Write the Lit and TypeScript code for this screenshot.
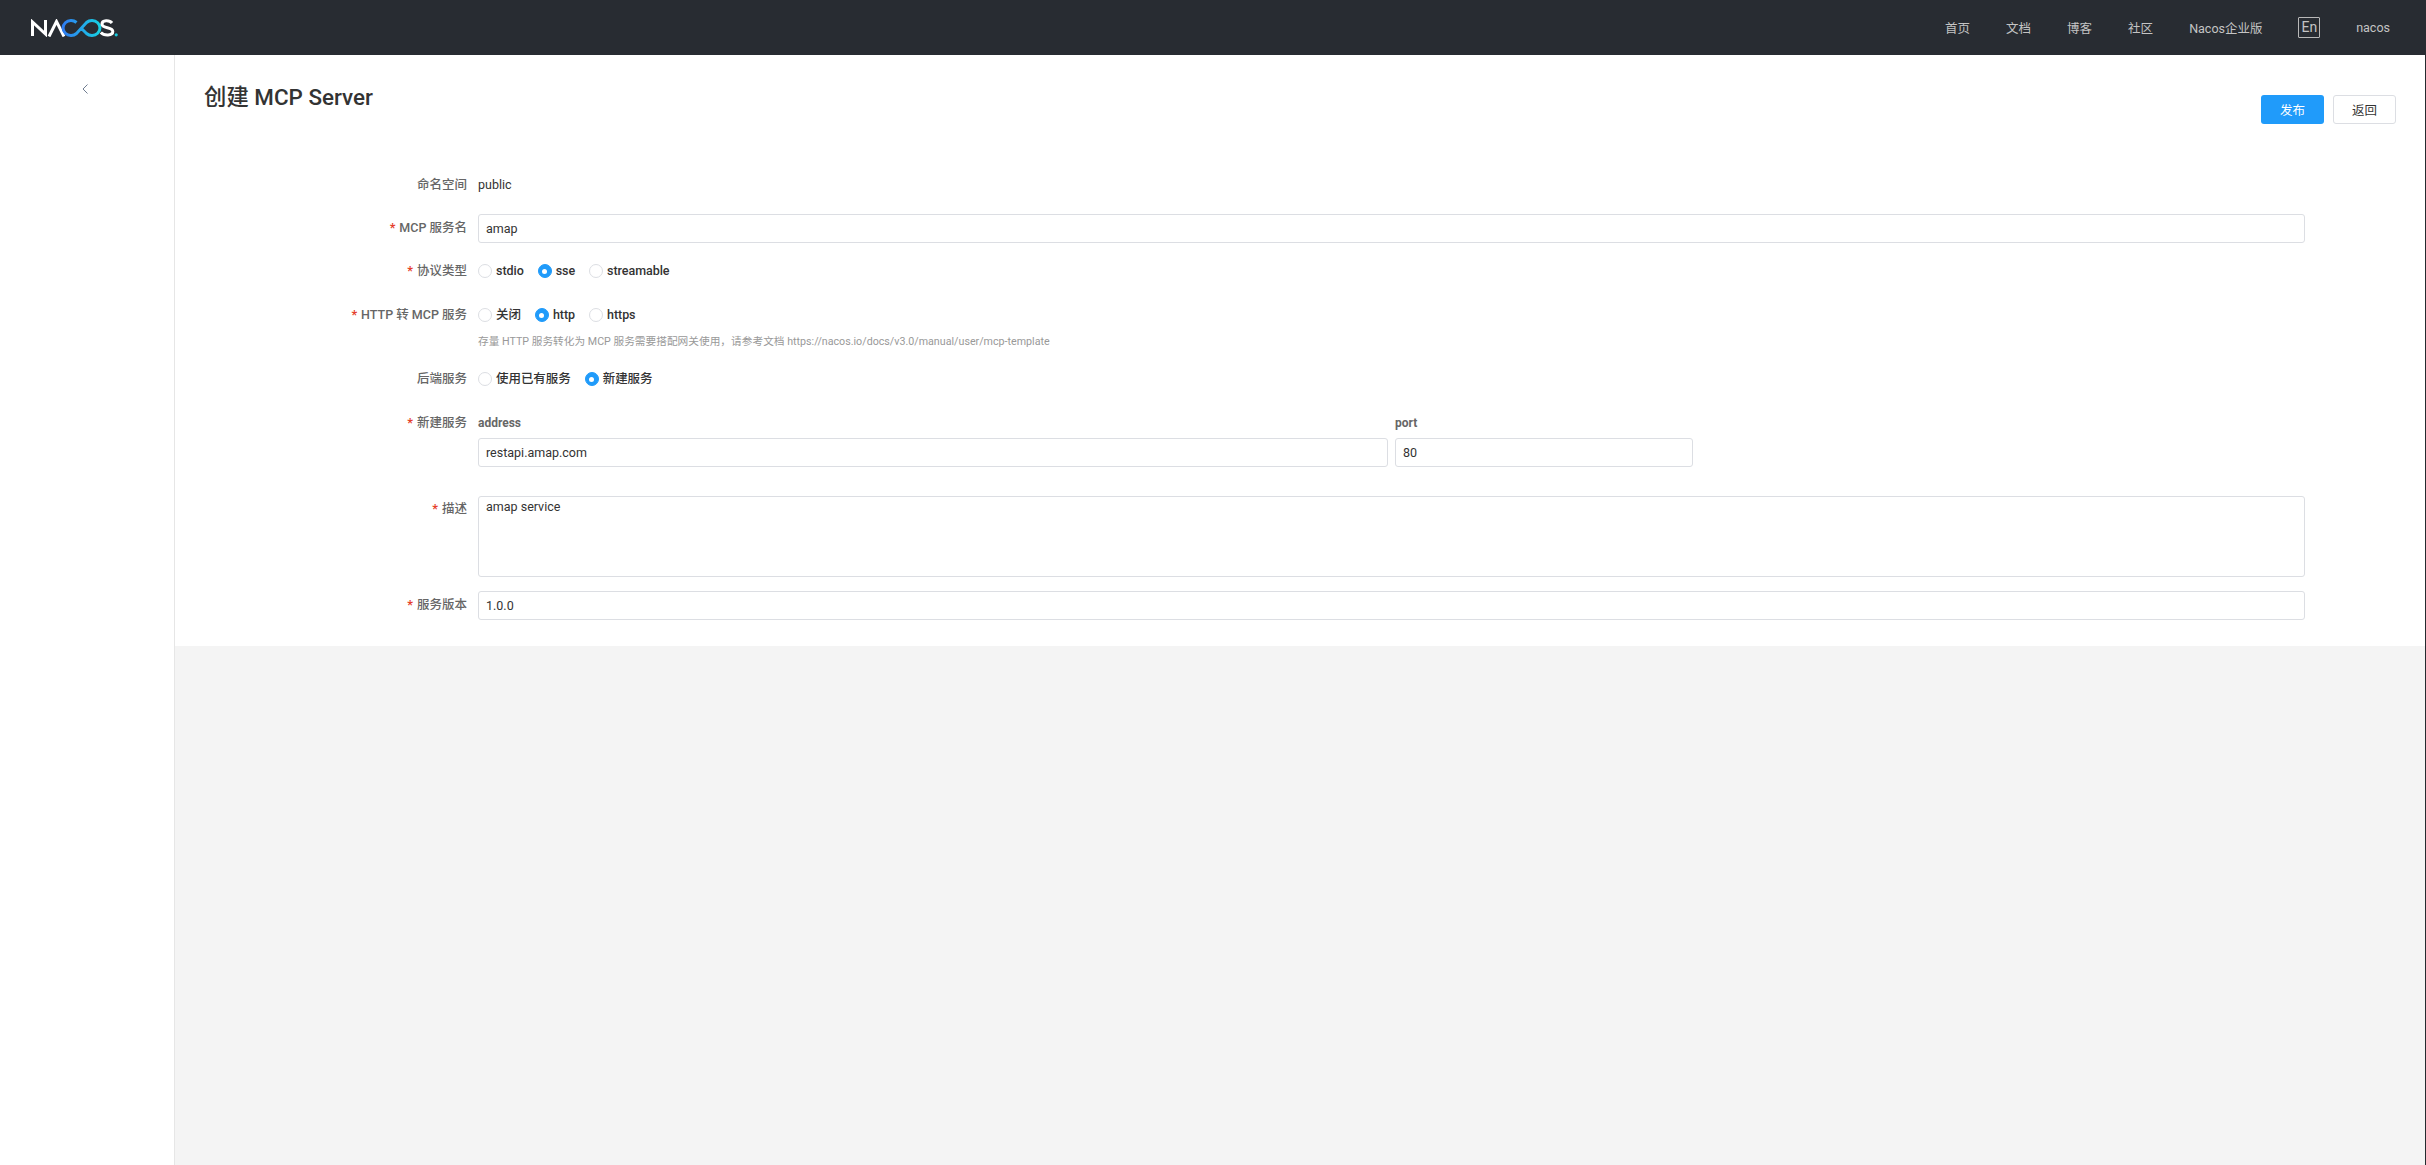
import { LitElement, html, css } from "lit";
import { customElement } from "lit/decorators.js";

const radio = (label: string, checked = false) => html`
  <span class="radio"><i class="dot ${checked ? "on" : ""}"></i><span>${label}</span></span>`;

@customElement("app-root")
export class AppRoot extends LitElement {
  static styles = css`
    :host { display: block; width: 2426px; height: 1165px; overflow: hidden; background: #252a2f; font-family: Roboto, "Noto Sans CJK SC", sans-serif; font-size: 12.5px; color: #333; }
    .top { height: 55px; background: #282c32; display: flex; align-items: center; padding: 0 36px 0 31px; box-sizing: border-box; }
    .logo { display: block; width: 87px; height: 18px; }
    .nav { margin-left: auto; display: flex; align-items: center; color: #c4c4c4; font-size: 12.5px; font-weight: 400; }
    .nav span { margin-left: 36px; }
    .nav .en { border: 1px solid #b8b8b8; border-radius: 1px; padding: 0 2px; line-height: 19px; height: 19px; font-size: 14px; }
    .main { display: flex; height: 1110px; width: 2425px; background: #f4f4f4; }
    .side { width: 175px; flex: none; box-sizing: border-box; background: #fff; border-right: 1px solid #e6e6e6; display: flex; justify-content: center; align-items: flex-start; padding: 29px 4px 0 0; }
    .side svg { display: block; width: 6px; height: 10px; }
    .content { flex: 1; min-width: 0; }
    .panel { background: #fff; height: 591px; box-sizing: border-box; padding: 28px 120px 0 0; }
    .head { display: flex; justify-content: space-between; height: 88px; padding-left: 29px; margin-right: -91px; }
    h1 { margin: 0; font-size: 22.4px; font-weight: 500; color: #333; line-height: 28px; }
    .actions { display: flex; gap: 9px; margin-top: 12px; }
    .btn { width: 63px; height: 29px; box-sizing: border-box; border-radius: 3px; display: flex; align-items: center; justify-content: center; padding-bottom: 1px; }
    .primary { background: #209bfa; color: #fff; }
    .normal { background: #fff; border: 1px solid #dcdee3; color: #333; }
    .row { display: flex; align-items: flex-start; }
    .lab { flex: none; width: 303px; padding-right: 11px; box-sizing: border-box; text-align: right; color: #666; font-weight: 500; line-height: 28px; }
    .req::before { content: "*"; color: #e53f2c; font-weight: 700; margin-right: 4px; }
    .ctl { flex: 1; min-width: 0; line-height: 28px; }
    .r-mcp { margin-top: 15px; }
    .r-proto { margin-top: 14px; }
    .r-http { margin-top: 16px; }
    .r-back { margin-top: 14px; }
    .r-new { margin-top: 21px; }
    .r-new .lab { line-height: 18px; }
    .r-desc { margin-top: 29px; }
    .r-desc .lab { margin-top: -1px; }
    .r-ver { margin-top: 14px; }
    .inp, .area { display: block; width: 100%; box-sizing: border-box; height: 29px; border: 1px solid #dcdee3; border-radius: 3px; padding: 0 7px; font: inherit; color: #333; background: #fff; outline: none; }
    .area { height: 81px; padding: 1px 7px; line-height: 17px; resize: none; overflow: hidden; }
    .radios { display: flex; height: 28px; align-items: center; }
    .radio { display: flex; align-items: center; margin-right: 14px; font-weight: 500; color: #333; letter-spacing: -0.05px; }
    .dot { width: 14px; height: 14px; box-sizing: border-box; border: 1px solid #dcdee3; border-radius: 50%; margin-right: 4px; background: #fff; display: flex; align-items: center; justify-content: center; }
    .dot.on { background: #209bfa; border-color: #209bfa; }
    .dot.on::after { content: ""; width: 5px; height: 5px; border-radius: 50%; background: #fff; }
    .hint { font-size: 10.7px; color: #999; line-height: 18px; margin-top: 4px; }
    .pair { display: flex; gap: 7px; }
    .addr { width: 910px; }
    .port { width: 298px; }
    .sub { line-height: 18px; color: #666; font-weight: 700; font-size: 12px; margin-bottom: 6px; }
  `;

  render() {
    return html`
      <header class="top">
        <svg class="logo" viewBox="0 0 87 18" fill="none" stroke-width="3">
          <defs><linearGradient id="g" x1="32" x2="69" y1="0" y2="0" gradientUnits="userSpaceOnUse"><stop offset="0" stop-color="#2f7cf0"/><stop offset="1" stop-color="#17d0e2"/></linearGradient></defs>
          <path d="M1.5 17V3L14.5 15V1" stroke="#fff"/>
          <path d="M18 17.5L25.5 2.5L33 17.5" stroke="#fff"/>
          <path d="M45.5 3.5A8 7.5 0 1 0 45.5 14.5L55.5 3.5A8 7.5 0 1 1 55.5 14.5L50.5 9.5" stroke="url(#g)"/>
          <path d="M81 4C78.5 .8 71 .8 71 5C71 10 81.8 7.5 81.8 12.6C81.8 17 73 17 69.8 13.5" stroke="#fff"/>
          <circle cx="85.2" cy="15.8" r="1.6" fill="#17c8dc"/>
        </svg>
        <nav class="nav">
          <span>首页</span><span>文档</span><span>博客</span><span>社区</span><span>Nacos企业版</span><span class="en">En</span><span>nacos</span>
        </nav>
      </header>
      <div class="main">
        <aside class="side">
          <svg viewBox="0 0 6 10" fill="none" stroke="#6f7c90" stroke-width="1"><path d="M5.5 .5L1 5L5.5 9.5"/></svg>
        </aside>
        <div class="content">
          <section class="panel">
            <div class="head">
              <h1>创建 MCP Server</h1>
              <div class="actions"><div class="btn primary">发布</div><div class="btn normal">返回</div></div>
            </div>
            <div class="row"><div class="lab">命名空间</div><div class="ctl">public</div></div>
            <div class="row r-mcp"><div class="lab req">MCP 服务名</div><div class="ctl"><input class="inp" .value=${"amap"} /></div></div>
            <div class="row r-proto"><div class="lab req">协议类型</div><div class="ctl radios">${radio("stdio")}${radio("sse", true)}${radio("streamable")}</div></div>
            <div class="row r-http"><div class="lab req">HTTP 转 MCP 服务</div>
              <div class="ctl"><div class="radios">${radio("关闭")}${radio("http", true)}${radio("https")}</div>
              <div class="hint">存量 HTTP 服务转化为 MCP 服务需要搭配网关使用，请参考文档 https://nacos.io/docs/v3.0/manual/user/mcp-template</div></div></div>
            <div class="row r-back"><div class="lab">后端服务</div><div class="ctl radios">${radio("使用已有服务")}${radio("新建服务", true)}</div></div>
            <div class="row r-new"><div class="lab req">新建服务</div>
              <div class="ctl pair">
                <div class="addr"><div class="sub">address</div><input class="inp" .value=${"restapi.amap.com"} /></div>
                <div class="port"><div class="sub">port</div><input class="inp" .value=${"80"} /></div>
              </div></div>
            <div class="row r-desc"><div class="lab req">描述</div><div class="ctl"><textarea class="area" .value=${"amap service"}></textarea></div></div>
            <div class="row r-ver"><div class="lab req">服务版本</div><div class="ctl"><input class="inp" .value=${"1.0.0"} /></div></div>
          </section>
        </div>
      </div>
    `;
  }
}
